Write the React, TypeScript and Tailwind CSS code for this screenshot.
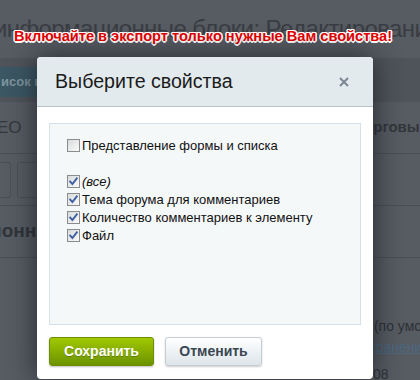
import React from "react";

function Box({ checked }: { checked: boolean }) {
  return (
    <span className="relative inline-block w-[13px] h-[13px] shrink-0 border border-[#8a8c8e] bg-linear-to-br from-[#d9dadb] to-[#fafafa]">
      {checked && (
        <svg viewBox="0 0 11 11" className="absolute left-0 top-0 w-[11px] h-[11px]">
          <path d="M2.2 5.6 L4.4 8 L8.8 2.4" fill="none" stroke="#3d5fa3" strokeWidth="1.9" strokeLinecap="square" />
        </svg>
      )}
    </span>
  );
}

function Row({ checked, children, italic }: { checked: boolean; children: React.ReactNode; italic?: boolean }) {
  return (
    <div className="flex items-center gap-[2px] h-[18px]">
      <Box checked={checked} />
      <span className={"text-[13px] text-[#111] leading-none " + (italic ? "italic" : "")}>{children}</span>
    </div>
  );
}

export default function App() {
  return (
    <div className="relative w-[420px] h-[380px] overflow-hidden bg-[#575b62] font-['Liberation_Sans',Arial,sans-serif]">
      {/* background page (dimmed) */}
      <div className="flex flex-col">
        <div className="h-[58px] pt-[17px] whitespace-nowrap ml-[-6px] text-[24px] tracking-[-0.6px] text-[#393d43] leading-none">
          информационные блоки: Редактирование
        </div>
        <div className="h-[44px] bg-[#4f535a] flex items-start pt-[9px]">
          <div className="w-[37px] h-[30px] bg-[#3b5763] overflow-hidden flex items-center pl-[1px] text-[13px] font-bold text-[#7f959e] whitespace-nowrap">
            исок п
          </div>
        </div>
        <div className="h-[52px] border-b border-[#4a4e55] flex items-center justify-between">
          <span className="text-[17px] text-[#33373c] ml-[-3px]">ЕО</span>
          <span className="text-[15px] font-bold text-[#33373c] mr-[-8px]">Торговые</span>
        </div>
        <div className="h-[52px] border-b border-[#4a4e55] flex items-center gap-[6px] pl-0">
          <div className="w-[11px] h-[36px] border border-[#4b4f56] border-l-0 rounded-r-[3px]" />
          <div className="w-[40px] h-[36px] border border-[#4b4f56] rounded-[3px] flex items-center justify-end text-[15px] text-[#34383d] overflow-hidden">Д</div>
        </div>
        <div className="h-[52px] border-b border-[#4a4e55] flex items-center">
          <span className="text-[19px] font-bold text-[#303439] ml-[-10px] whitespace-nowrap">ионны</span>
        </div>
        <div className="h-[58px]" />
        <div className="flex flex-col items-end pr-0 whitespace-nowrap">
          <span className="text-[14px] text-[#2e3237] mr-[-10px]">(по умол</span>
          <span className="text-[14px] text-[#4b6880] underline mr-[-10px]">хранения</span>
          <span className="text-[14px] text-[#2e3237] mt-[6px] mr-[0px] self-start ml-[373px]">08</span>
        </div>
      </div>

      {/* warning text */}
      <div className="absolute left-[14px] top-[29px] whitespace-nowrap text-[14.6px] font-bold text-[#e60000] leading-none [text-shadow:-1px_-1px_0_#fff,1px_-1px_0_#fff,-1px_1px_0_#fff,1px_1px_0_#fff,0_-1.5px_0_#fff,0_1.5px_0_#fff,-1.5px_0_0_#fff,1.5px_0_0_#fff]">
        Включайте в экспорт только нужные Вам свойства!
      </div>

      {/* dialog */}
      <div className="absolute left-[37px] top-[57px] w-[336px] h-[322px] rounded-[4px] bg-white shadow-[0_0_28px_rgba(20,24,30,0.75)] flex flex-col">
        <div className="h-[50px] bg-[#e2eaed] border-b border-[#b9c2c6] rounded-t-[4px] flex items-center justify-between pl-[18px] pr-[24px]">
          <span className="text-[19.6px] text-[#1b1b1b] leading-none">Выберите свойства</span>
          <svg viewBox="0 0 10 10" className="w-[10px] h-[10px]">
            <path d="M1 1 L9 9 M9 1 L1 9" stroke="#7c8793" strokeWidth="2" />
          </svg>
        </div>
        <div className="px-[12px] pt-[16px]">
          <div className="h-[202px] border border-[#d6e1e7] bg-[#f5f8f9] pl-[17px] pt-[12px]">
            <Row checked={false}>Представление формы и списка</Row>
            <div className="h-[18px]" />
            <Row checked italic>(все)</Row>
            <Row checked>Тема форума для комментариев</Row>
            <Row checked>Количество комментариев к элементу</Row>
            <Row checked>Файл</Row>
          </div>
          <div className="flex gap-[11px] mt-[12px]">
            <button className="w-[105px] h-[29px] rounded-[3px] border border-[#6e8c00] bg-linear-to-b from-[#a1c800] to-[#6c9300] text-white text-[14px] font-bold [text-shadow:0_1px_0_rgba(0,0,0,0.25)] shadow-[0_1px_2px_rgba(0,0,0,0.25)]">
              Сохранить
            </button>
            <button className="w-[97px] h-[29px] rounded-[3px] border border-[#c5cdd2] bg-linear-to-b from-[#ffffff] to-[#dde5e9] text-[#3a4651] text-[14px] font-bold shadow-[0_1px_2px_rgba(0,0,0,0.2)]">
              Отменить
            </button>
          </div>
        </div>
      </div>
    </div>
  );
}
